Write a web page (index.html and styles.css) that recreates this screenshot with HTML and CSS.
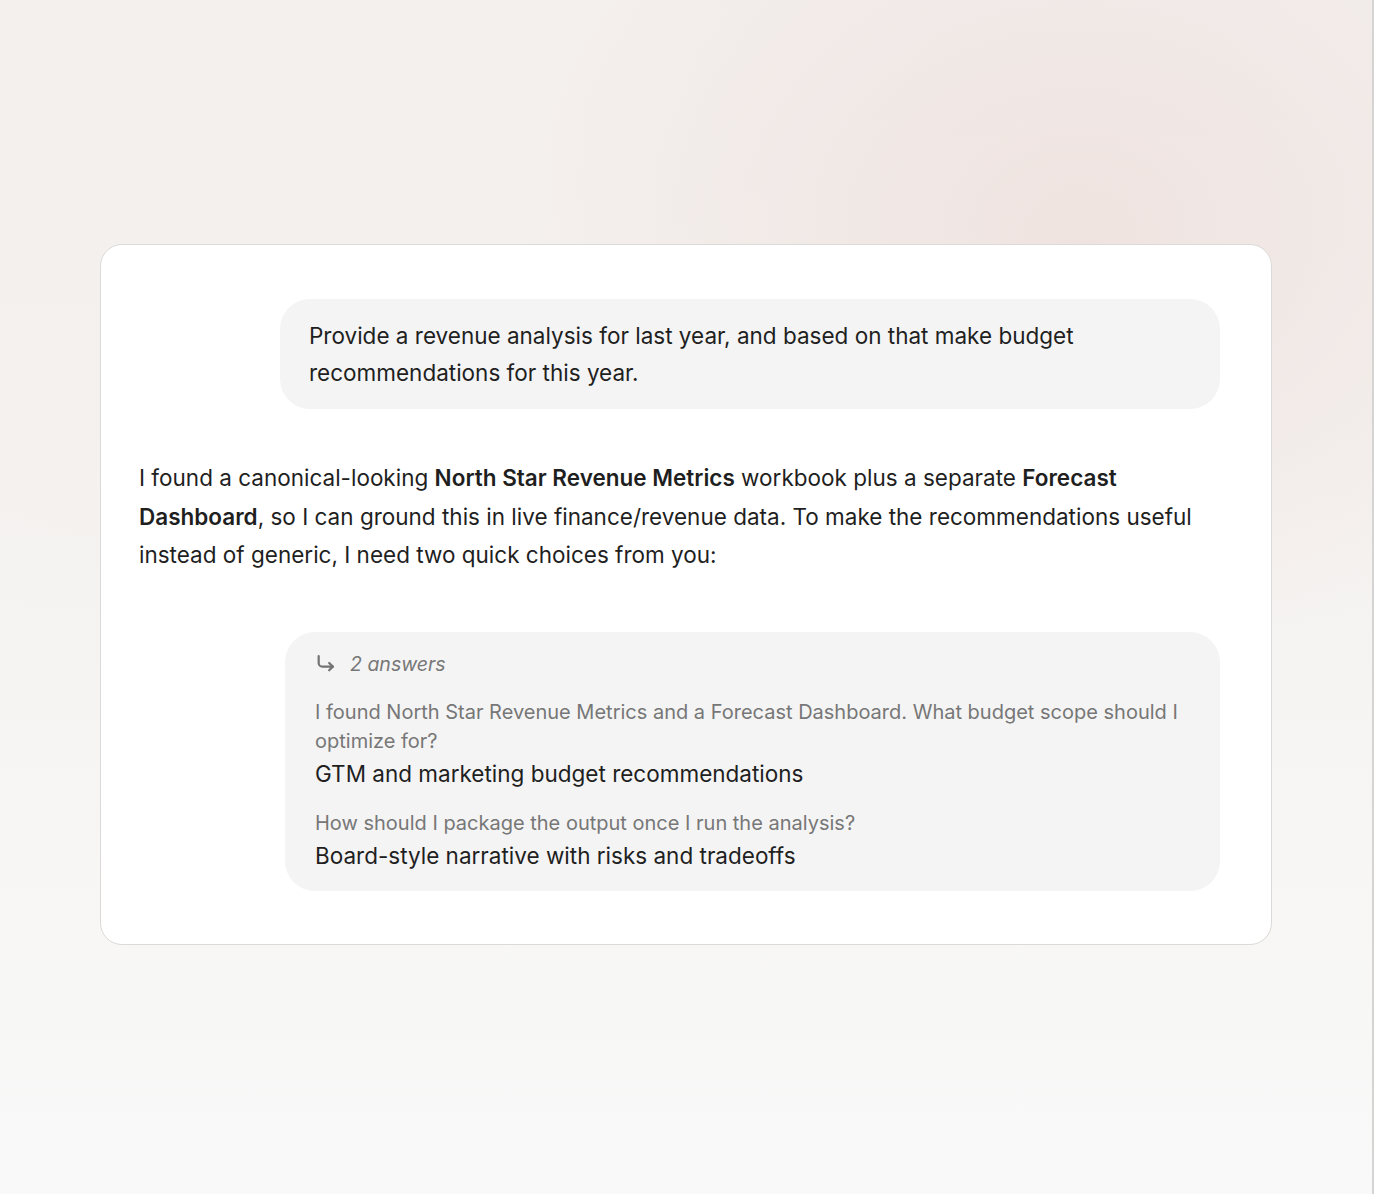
FILE: index.html
```html
<!DOCTYPE html>
<html lang="en">
<head>
<meta charset="utf-8">
<title>Chat</title>
<link rel="stylesheet" href="styles.css">
</head>
<body>
<div class="page">
  <main class="card">
    <div class="user-row">
      <div class="user-bubble">Provide a revenue analysis for last year, and based on that make budget recommendations for this year.</div>
    </div>
    <p class="assistant">I found a canonical-looking <strong>North Star Revenue Metrics</strong> workbook plus a separate <strong>Forecast Dashboard</strong>, so I can ground this in live finance/revenue data. To make the recommendations useful instead of generic, I need two quick choices from you:</p>
    <div class="answers-row">
      <section class="answers">
        <div class="answers-head">
          <svg class="reply-icon" width="21" height="21" viewBox="0 0 20 20" fill="none" stroke="#737373" stroke-width="2.1" stroke-linecap="round" stroke-linejoin="round"><path d="M3.5 3v6.5a3.5 3.5 0 0 0 3.5 3.5h10"/><path d="M13.5 9.5l3.5 3.5-3.5 3.5"/></svg>
          <span class="answers-count">2 answers</span>
        </div>
        <div class="qa">
          <div class="question">I found North Star Revenue Metrics and a Forecast Dashboard. What budget scope should I optimize for?</div>
          <div class="answer">GTM and marketing budget recommendations</div>
        </div>
        <div class="qa">
          <div class="question">How should I package the output once I run the analysis?</div>
          <div class="answer">Board-style narrative with risks and tradeoffs</div>
        </div>
      </section>
    </div>
  </main>
</div>
</body>
</html>
```
FILE: styles.css
```css
html, body {
  margin: 0;
  padding: 0;
}
body {
  font-family: Inter, "Noto Sans", "Liberation Sans", sans-serif;
  color: #1f1f1f;
  background: #f8f8f8;
}
.page {
  min-height: 1194px;
  box-sizing: border-box;
  border-right: 2px solid #d6d4d3;
  padding-top: 244px;
  background:
    radial-gradient(ellipse 560px 440px at 1080px 230px, rgba(238, 224, 220, 0.8), rgba(238, 224, 220, 0) 100%),
    radial-gradient(ellipse 700px 500px at 300px 150px, rgba(244, 240, 237, 0.9), rgba(244, 240, 237, 0) 100%),
    linear-gradient(180deg, #f3efed 0%, #f4f1ef 35%, #f7f6f5 70%, #f9f9f9 100%);
}
.card {
  width: 1172px;
  height: 701px;
  box-sizing: border-box;
  margin: 0 auto;
  background: #ffffff;
  border: 1px solid #dcdad8;
  border-radius: 22px;
  padding: 54px 51px 0 38px;
  display: flex;
  flex-direction: column;
}
.user-row {
  display: flex;
  justify-content: flex-end;
}
.user-bubble {
  width: 940px;
  box-sizing: border-box;
  background: #f4f4f4;
  border-radius: 30px;
  padding: 18px 40px 18px 29px;
  font-size: 22.5px;
  line-height: 37px;
  color: #1f1f1f;
}
.assistant {
  margin: 50px 0 0 0;
  font-size: 22.5px;
  line-height: 38.5px;
  color: #1f1f1f;
}
.assistant strong {
  font-weight: 600;
}
.answers-row {
  display: flex;
  justify-content: flex-end;
  margin-top: 57px;
}
.answers {
  width: 935px;
  box-sizing: border-box;
  background: #f4f4f4;
  border-radius: 30px;
  padding: 18px 30px 17px 30px;
}
.answers-head {
  display: flex;
  align-items: center;
  gap: 14px;
  height: 28px;
  margin-bottom: 20px;
}
.reply-icon {
  flex: none;
}
.answers-count {
  font-style: italic;
  font-size: 19.5px;
  color: #777777;
}
.qa + .qa {
  margin-top: 17px;
}
.question {
  font-size: 20px;
  line-height: 29px;
  color: #777777;
}
.answer {
  font-size: 22.5px;
  line-height: 36px;
  color: #1f1f1f;
}
```
